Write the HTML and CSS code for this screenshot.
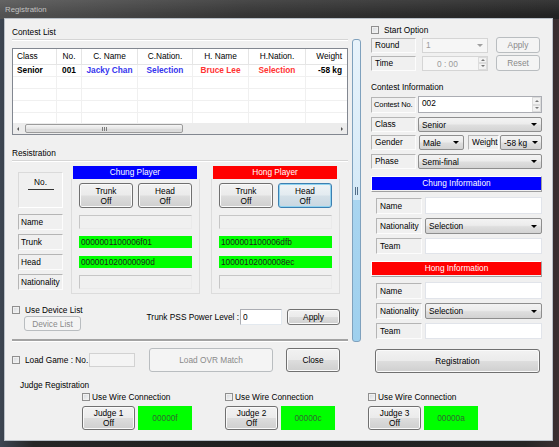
FILE: index.html
```html
<!DOCTYPE html>
<html lang="en">
<head>
    <meta charset="UTF-8">
    <title>Registration</title>
    <link rel="stylesheet" href="styles.css">
</head>
<body>
<div class="window">
    <div class="titlebar">Registration</div>
    <div class="client">
        <div class="main">
            <div class="left">
                <div class="caption">Contest List</div>
                <div class="list">
                    <div class="list-row head">
                        <span>Class</span><span>No.</span><span>C. Name</span><span>C.Nation.</span><span>H. Name</span><span>H.Nation.</span><span>Weight</span>
                    </div>
                    <div class="list-row data">
                        <span>Senior</span><span>001</span><span class="blue">Jacky Chan</span><span class="blue">Selection</span><span class="red">Bruce Lee</span><span class="red">Selection</span><span>-58 kg</span>
                    </div>
                    <div class="list-row"><span></span><span></span><span></span><span></span><span></span><span></span><span></span></div>
                    <div class="list-row"><span></span><span></span><span></span><span></span><span></span><span></span><span></span></div>
                    <div class="list-row"><span></span><span></span><span></span><span></span><span></span><span></span><span></span></div>
                    <div class="list-row fill"><span></span><span></span><span></span><span></span><span></span><span></span><span></span></div>
                    <div class="hscroll">
                        <i class="arrow-l"></i>
                        <div class="thumb"><i class="grip"></i></div>
                        <i class="arrow-r"></i>
                    </div>
                </div>

                <div class="caption reg">Resistration</div>
                <div class="reg-area">
                    <div class="labels">
                        <div class="no-box">No.<i></i></div>
                        <span class="lbl">Name</span>
                        <span class="lbl">Trunk</span>
                        <span class="lbl">Head</span>
                        <span class="lbl">Nationality</span>
                    </div>
                    <div class="player">
                        <div class="bar chung">Chung Player</div>
                        <div class="pbody">
                            <div class="pbtns">
                                <button class="btn">Trunk<br>Off</button>
                                <button class="btn">Head<br>Off</button>
                            </div>
                            <div class="frows">
                                <div class="frow"><span class="fld"></span></div>
                                <div class="frow"><span class="fld green">0000001100006f01</span></div>
                                <div class="frow"><span class="fld green">000001020000090d</span></div>
                                <div class="frow"><span class="fld"></span></div>
                            </div>
                        </div>
                    </div>
                    <div class="player">
                        <div class="bar hong">Hong Player</div>
                        <div class="pbody">
                            <div class="pbtns">
                                <button class="btn">Trunk<br>Off</button>
                                <button class="btn focus">Head<br>Off</button>
                            </div>
                            <div class="frows">
                                <div class="frow"><span class="fld"></span></div>
                                <div class="frow"><span class="fld green">1000001100006dfb</span></div>
                                <div class="frow"><span class="fld green">10000102000008ec</span></div>
                                <div class="frow"><span class="fld"></span></div>
                            </div>
                        </div>
                    </div>
                </div>

                <div class="device-row">
                    <div class="dev-left">
                        <label class="check"><input type="checkbox">Use Device List</label>
                        <button class="btn off small" disabled>Device List</button>
                    </div>
                    <div class="dev-right">
                        <span>Trunk PSS Power Level :</span>
                        <input class="num" type="text" value="0">
                        <button class="btn apply">Apply</button>
                    </div>
                </div>

                <div class="sep"></div>

                <div class="load-row">
                    <label class="check"><input type="checkbox">Load Game : No.</label>
                    <span class="load-no"></span>
                    <button class="btn off ovr" disabled>Load OVR Match</button>
                    <button class="btn close">Close</button>
                </div>
            </div>

            <div class="splitter"><i></i></div>

            <div class="right">
                <label class="check start"><input type="checkbox">Start Option</label>
                <div class="rrow r16">
                    <span class="rl">Round</span>
                    <div class="combo off w66"><span>1</span></div>
                    <button class="btn off rbtn" disabled>Apply</button>
                </div>
                <div class="rrow r16">
                    <span class="rl">Time</span>
                    <div class="spinbox off w66"><span class="val">0 : 00</span><span class="spin"><i></i><i></i></span></div>
                    <button class="btn off rbtn" disabled>Reset</button>
                </div>

                <div class="subtitle">Contest Information</div>
                <div class="rrow r-no">
                    <span class="rl">Contest No.</span>
                    <div class="spinbox cno"><span class="val">002</span><span class="spin"><i></i><i></i></span></div>
                </div>
                <div class="rrow r-class">
                    <span class="rl">Class</span>
                    <div class="combo wide"><span>Senior</span></div>
                </div>
                <div class="rrow r-gender">
                    <span class="rl">Gender</span>
                    <div class="combo male"><span>Male</span></div>
                    <span class="rl weight">Weight</span>
                    <div class="combo kg"><span>-58 kg</span></div>
                </div>
                <div class="rrow r-class">
                    <span class="rl">Phase</span>
                    <div class="combo wide"><span>Semi-final</span></div>
                </div>

                <div class="info"><div class="chung">Chung Information</div></div>
                <div class="irow first"><span class="rl">Name</span><input class="txt" type="text"></div>
                <div class="irow"><span class="rl">Nationality</span><div class="combo nat"><span>Selection</span></div></div>
                <div class="irow"><span class="rl">Team</span><input class="txt" type="text"></div>

                <div class="info"><div class="hong">Hong Information</div></div>
                <div class="irow first"><span class="rl">Name</span><input class="txt" type="text"></div>
                <div class="irow"><span class="rl">Nationality</span><div class="combo nat"><span>Selection</span></div></div>
                <div class="irow"><span class="rl">Team</span><input class="txt" type="text"></div>

                <button class="btn register">Registration</button>
            </div>
        </div>

        <div class="judge">
            <div class="judge-title">Judge Registration</div>
            <div class="judges">
                <div class="jg">
                    <label class="check"><input type="checkbox">Use Wire Connection</label>
                    <div class="jline"><button class="btn">Judge 1<br>Off</button><span class="jcode">00000f</span></div>
                </div>
                <div class="jg">
                    <label class="check"><input type="checkbox">Use Wire Connection</label>
                    <div class="jline"><button class="btn">Judge 2<br>Off</button><span class="jcode">00000c</span></div>
                </div>
                <div class="jg">
                    <label class="check"><input type="checkbox">Use Wire Connection</label>
                    <div class="jline"><button class="btn">Judge 3<br>Off</button><span class="jcode">00000a</span></div>
                </div>
            </div>
        </div>
    </div>
</div>
</body>
</html>
```

FILE: styles.css
```css
* {
    box-sizing: border-box;
}
body {
    margin: 0;
    background: #1d1d1d;
    font-family: "Liberation Sans", Arial, sans-serif;
    font-size: 8.3px;
    color: #000;
}
.window {
    width: 559px;
    height: 447px;
    display: flex;
    flex-direction: column;
    overflow: hidden;
    background: linear-gradient(90deg, #3d4653 0%, #262626 6%, #1e1e1e 50%, #262626 94%, #3b2f31 100%);
}
.titlebar {
    height: 19px;
    flex: none;
    padding: 5px 0 0 5px;
    font-size: 7.8px;
    color: #c2c2c2;
    background: linear-gradient(180deg, rgba(255,255,255,0.10), rgba(255,255,255,0) 80%),
                linear-gradient(90deg, #525252, #343434 45%, #222);
}
.client {
    height: 421px;
    flex: none;
    margin: 0 7px 0 5px;
    background: #f0f0f0;
    box-shadow: 0 0 0 1px #b9c0c8;
}
.main {
    display: flex;
    align-items: flex-start;
    padding-left: 7px;
}

/* left column */
.left {
    width: 336px;
    flex: none;
    padding-top: 7px;
}
.caption {
    height: 14px;
    line-height: 13px;
    border-bottom: 1px solid #d5d5d5;
    box-shadow: 0 1px 0 #fff;
}
.caption.reg {
    margin-top: 12px;
}
.list {
    margin-top: 8px;
    height: 87px;
    border: 1px solid #828790;
    background: #fff;
    display: flex;
    flex-direction: column;
}
.list-row {
    display: flex;
    height: 12px;
    line-height: 11px;
    border-bottom: 1px solid #f0f0f0;
    flex: none;
}
.list-row.head {
    height: 16px;
    line-height: 15px;
    border-bottom-color: #e5e5e5;
}
.list-row.fill {
    flex: 1;
    border-bottom: none;
}
.list-row.data {
    font-weight: bold;
}
.list-row span {
    border-right: 1px solid #f0f0f0;
    text-align: center;
    white-space: nowrap;
    overflow: hidden;
}
.list-row.head span {
    border-right-color: #e5e5e5;
}
.list-row span:nth-child(1) { width: 44px; text-align: left; padding-left: 4px; }
.list-row span:nth-child(2) { width: 25px; }
.list-row span:nth-child(3) { width: 56px; }
.list-row span:nth-child(4) { width: 55px; }
.list-row span:nth-child(5) { width: 56px; }
.list-row span:nth-child(6) { width: 57px; }
.list-row span:nth-child(7) { width: 41px; border-right: none; text-align: right; padding-right: 5px; }
.blue { color: #3535ee; }
.red { color: #ff3333; }

.hscroll {
    height: 11px;
    flex: none;
    display: flex;
    align-items: center;
    padding: 0 4px 0 4px;
    background: #ececec;
}
.arrow-l, .arrow-r {
    width: 0;
    height: 0;
    border-top: 2px solid transparent;
    border-bottom: 2px solid transparent;
}
.arrow-l { border-right: 2px solid #555; }
.arrow-r { border-left: 2px solid #555; margin-left: auto; }
.thumb {
    margin-left: 6px;
    width: 158px;
    height: 9px;
    border: 1px solid #9b9b9b;
    border-radius: 2px;
    background: linear-gradient(#f5f5f5, #e6e6e6 50%, #d8d8d8 51%, #dedede);
    display: flex;
    align-items: center;
    justify-content: center;
}
.grip {
    width: 5px;
    height: 4px;
    background: repeating-linear-gradient(90deg, #7d7d7d 0 1px, transparent 1px 2px);
}

.reg-area {
    display: flex;
    margin-top: 5px;
    padding-left: 6px;
}
.labels {
    width: 45px;
    flex: none;
    margin-right: 8px;
    padding-top: 6px;
    display: flex;
    flex-direction: column;
}
.no-box {
    height: 36px;
    margin-bottom: 4px;
    padding-top: 5px;
    line-height: 9px;
    text-align: center;
    border: 1px solid;
    border-color: #dadada #fff #fff #dadada;
}
.no-box i {
    display: block;
    width: 26px;
    height: 1px;
    margin: 2px auto 0;
    background: #333;
}
.lbl {
    height: 16px;
    margin: 2px 0;
    padding-left: 2px;
    line-height: 14px;
    white-space: nowrap;
    border: 1px solid;
    border-color: #b5b5b5 #fcfcfc #fcfcfc #b5b5b5;
}
.player {
    width: 129px;
    flex: none;
}
.player + .player {
    margin-left: 11px;
}
.bar {
    height: 13px;
    line-height: 13px;
    margin: 0 3px 0 2px;
    color: #fff;
    text-align: center;
}
.bar.chung { background: #0000ff; }
.bar.hong { background: #ff0000; }
.pbody {
    border: 1px solid #dcdcdc;
    border-top: none;
    padding: 4px 7px 1px;
}
.pbtns {
    display: flex;
    gap: 5px;
}
.pbtns .btn {
    width: 54px;
    height: 25px;
}
.frows {
    margin-top: 4px;
}
.frow {
    height: 20px;
    display: flex;
    align-items: center;
}
.fld {
    width: 113px;
    height: 14px;
    background: #f0f0f0;
    border: 1px solid;
    border-color: #c6c6c6 #eaeaea #eaeaea #c6c6c6;
}
.fld.green {
    height: 12px;
    padding-left: 2px;
    line-height: 12px;
    border: none;
    background: #00ff00;
    color: #1e1e1e;
}

/* buttons, checkboxes, inputs */
.btn {
    flex: none;
    padding: 0;
    font: inherit;
    line-height: 10px;
    color: #000;
    border: 1px solid #707070;
    border-radius: 3px;
    background: linear-gradient(#f2f2f2, #ebebeb 48%, #dddddd 52%, #cfcfcf);
    box-shadow: inset 0 0 0 1px #fafafa;
}
.btn.focus {
    border-color: #3c7fb1;
    background: linear-gradient(#eef3f6, #e3ebf0 48%, #d4e0e8 52%, #c9d7e1);
    box-shadow: inset 0 0 0 1px #8fd3f0;
}
.btn.off {
    border-color: #b9bdc0;
    background: #f4f4f4;
    color: #8a8a8a;
    box-shadow: none;
}
.check {
    display: flex;
    align-items: center;
    height: 11px;
    white-space: nowrap;
}
.check input {
    appearance: none;
    width: 8px;
    height: 8px;
    margin: 0 5px 0 0;
    flex: none;
    border: 1px solid #8f8f8f;
    background: linear-gradient(135deg, #d3d7db, #f7f7f7);
    box-shadow: inset 0 0 0 1px #f0f0f0;
}

.device-row {
    display: flex;
    height: 27px;
    margin-top: 10px;
}
.dev-left {
    display: flex;
    flex-direction: column;
}
.btn.small {
    width: 57px;
    height: 15px;
    margin: 1px 0 0 12px;
}
.dev-right {
    display: flex;
    align-items: center;
    height: 16px;
    margin: 5px 8px 0 auto;
}
.num {
    width: 42px;
    height: 16px;
    margin-left: 1px;
    padding: 0 2px;
    font: inherit;
    border: 1px solid;
    border-color: #abadb3 #e3e9ef #e3e9ef #abadb3;
    background: #fff;
    outline: none;
}
.btn.apply {
    width: 53px;
    height: 16px;
    margin-left: 5px;
}
.sep {
    margin-top: 8px;
    border-top: 2px solid #a3a3a3;
    border-bottom: 1px solid #fff;
}
.load-row {
    display: flex;
    align-items: center;
    height: 24px;
    margin-top: 6px;
}
.load-row .check {
    width: 77px;
}
.load-no {
    width: 46px;
    height: 14px;
    border: 1px solid #d2d2d2;
    background: #f4f4f4;
}
.btn.ovr {
    width: 124px;
    height: 24px;
    margin-left: 14px;
}
.btn.close {
    width: 54px;
    height: 24px;
    margin-left: 13px;
}

/* splitter */
.splitter {
    flex: none;
    width: 9px;
    height: 303px;
    margin: 20px 0 0 4px;
    border: 1px solid #7fa1bd;
    border-radius: 3px;
    background: linear-gradient(#e8f3fb, #d4e9f7 53%, #a9d5f0 53%, #9fd0ee);
    display: flex;
    align-items: center;
    justify-content: center;
}
.splitter i {
    width: 3px;
    height: 8px;
    border-left: 1px solid #55708a;
    border-right: 1px solid #55708a;
}

/* right column */
.right {
    width: 171px;
    flex: none;
    margin-left: 10px;
    padding-top: 6px;
    display: flex;
    flex-direction: column;
}
.check.start {
    height: 10px;
}
.rrow {
    display: flex;
    align-items: center;
    flex: none;
}
.rl {
    flex: none;
    width: 45px;
    height: 15px;
    padding-left: 3px;
    line-height: 13px;
    white-space: nowrap;
    overflow: hidden;
    border: 1px solid;
    border-color: #b5b5b5 #fcfcfc #fcfcfc #b5b5b5;
}
.r16 {
    height: 16px;
    margin-top: 2px;
}
.w66 {
    width: 66px;
    height: 15px;
    margin-left: 6px;
}
.rbtn {
    width: 44px;
    height: 16px;
    margin-left: 8px;
}
.subtitle {
    height: 14px;
    line-height: 14px;
    margin-top: 9px;
}
.r-no {
    height: 17px;
    margin-top: 2px;
}
.r-no .rl {
    height: 16px;
    padding-left: 2px;
    line-height: 14px;
    font-size: 7.5px;
    letter-spacing: -0.1px;
}
.r-class {
    height: 15px;
    margin-top: 4px;
}
.r-gender {
    height: 15px;
    margin-top: 3px;
}
.combo {
    flex: none;
    height: 15px;
    display: flex;
    align-items: center;
    justify-content: space-between;
    padding: 0 4px 0 3px;
    white-space: nowrap;
    border: 1px solid #8e8e8e;
    border-radius: 2px;
    background: linear-gradient(#f3f3f3, #ececec 45%, #dedede 55%, #d3d3d3);
}
.combo::after {
    content: "";
    border-left: 3px solid transparent;
    border-right: 3px solid transparent;
    border-top: 3px solid #000;
}
.combo.off {
    border-color: #d5d5d5;
    border-radius: 0;
    background: #f6f6f6;
    color: #9a9a9a;
}
.combo.off::after {
    border-top-color: #a0a0a0;
}
.combo.wide {
    width: 124px;
    margin-left: 2px;
}
.combo.male {
    width: 45px;
    margin-left: 3px;
}
.rl.weight {
    width: 31px;
    margin-left: 4px;
}
.combo.kg {
    width: 42px;
    margin-left: 1px;
    padding-right: 3px;
}
.spinbox {
    flex: none;
    display: flex;
    border: 1px solid #abadb3;
    background: #fff;
}
.spinbox .val {
    flex: 1;
    padding: 1px 0 0 3px;
}
.spinbox.off {
    border-color: #d5d5d5;
    background: #f6f6f6;
    color: #9a9a9a;
}
.spinbox.off .val {
    padding: 2px 0 0 14px;
}
.spinbox.cno {
    width: 124px;
    height: 17px;
    margin-left: 2px;
}
.spin {
    width: 9px;
    display: flex;
    flex-direction: column;
}
.spin i {
    flex: 1;
    display: flex;
    align-items: center;
    justify-content: center;
    background: #f2f2f2;
    border: 1px solid #dcdcdc;
}
.spin i::after {
    content: "";
    border-left: 2px solid transparent;
    border-right: 2px solid transparent;
}
.spin i:first-child::after { border-bottom: 2px solid #777; }
.spin i:last-child::after { border-top: 2px solid #777; }

.info {
    height: 16px;
    margin-top: 7px;
    border: 1px solid;
    border-color: #fff #a0a0a0 #a0a0a0 #fff;
}
.info div {
    height: 13px;
    line-height: 13px;
    color: #fff;
    text-align: center;
}
.info .chung { background: #0000ff; }
.info .hong { background: #ff0000; }
.irow {
    display: flex;
    align-items: center;
    height: 16px;
    margin-top: 4px;
    padding-left: 5px;
}
.irow.first {
    height: 17px;
    margin-top: 5px;
}
.irow .rl {
    width: 46px;
    height: 16px;
    line-height: 14px;
}
.txt {
    width: 117px;
    height: 100%;
    margin-left: 3px;
    padding: 0;
    font: inherit;
    border: 1px solid #e1e4ea;
    background: #fff;
    outline: none;
}
.combo.nat {
    width: 117px;
    height: 16px;
    margin-left: 3px;
}
.btn.register {
    width: 165px;
    height: 24px;
    margin: 10px 0 0 4px;
}

/* judges */
.judge {
    margin-top: 6px;
    padding-left: 15px;
}
.judge-title {
    height: 12px;
    line-height: 12px;
}
.judges {
    display: flex;
    gap: 33px;
    margin: 1px 0 0 62px;
}
.jg {
    width: 110px;
}
.jg .check {
    height: 10px;
}
.jg .check input {
    margin-right: 2px;
}
.jline {
    display: flex;
    gap: 3px;
    margin-top: 4px;
}
.jline .btn {
    width: 53px;
    height: 24px;
}
.jcode {
    width: 54px;
    height: 24px;
    line-height: 24px;
    text-align: center;
    background: #00ff00;
    color: #2f6b2f;
}
```
